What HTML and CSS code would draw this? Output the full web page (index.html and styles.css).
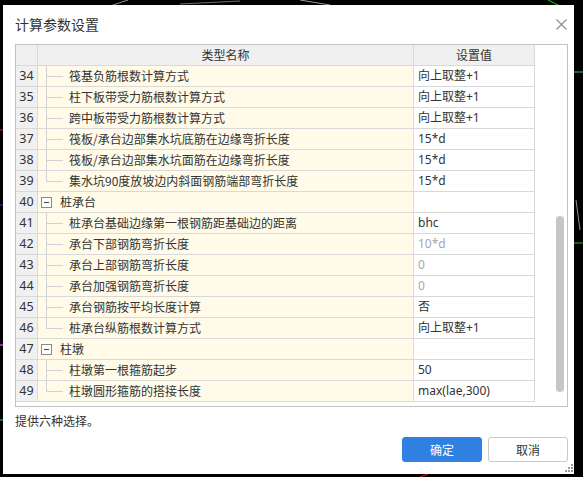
FILE: index.html
```html
<!DOCTYPE html>
<html lang="zh">
<head>
<meta charset="utf-8">
<title>计算参数设置</title>
<link rel="stylesheet" href="styles.css">
</head>
<body>
<svg class="backdrop" width="583" height="477" viewBox="0 0 583 477">
  <line x1="110" y1="6" x2="128" y2="0" stroke="#8a8a8a" stroke-width="1"/>
  <line x1="180" y1="4" x2="240" y2="1" stroke="#707070" stroke-width="1"/>
  <line x1="300" y1="0" x2="330" y2="5" stroke="#9a9a9a" stroke-width="1"/>
  <line x1="548" y1="0" x2="560" y2="6" stroke="#1ec81e" stroke-width="1"/>
  <line x1="0" y1="130" x2="3" y2="130" stroke="#d02020" stroke-width="1"/>
  <line x1="0" y1="205" x2="3" y2="205" stroke="#2040d0" stroke-width="1"/>
  <line x1="0" y1="345" x2="3" y2="345" stroke="#a020d0" stroke-width="2"/>
  <line x1="0" y1="420" x2="3" y2="420" stroke="#20c0c0" stroke-width="1"/>
  <line x1="574" y1="72" x2="583" y2="72" stroke="#20c0c0" stroke-width="1"/>
  <line x1="574" y1="243" x2="583" y2="243" stroke="#20c020" stroke-width="1"/>
  <line x1="576" y1="200" x2="580" y2="230" stroke="#909090" stroke-width="1"/>
  <line x1="420" y1="477" x2="428" y2="474" stroke="#d02020" stroke-width="1"/>
</svg>

<div class="dialog">
  <div class="titlebar">
    <span class="title">计算参数设置</span>
    <svg class="close" width="11" height="11" viewBox="0 0 11 11">
      <line x1="0.5" y1="0.5" x2="10.5" y2="10.5" stroke="#8c8c8c" stroke-width="1.1"/>
      <line x1="10.5" y1="0.5" x2="0.5" y2="10.5" stroke="#8c8c8c" stroke-width="1.1"/>
    </svg>
  </div>

  <div class="grid">
    <div class="cols">
      <div class="row head">
        <div class="num"></div>
        <div class="name hname">类型名称</div>
        <div class="val hval">设置值</div>
      </div>

      <div class="row"><div class="num">34</div><div class="name"><svg class="tree" width="31" height="20"><line x1="8.5" y1="0" x2="8.5" y2="20"/><line x1="8.5" y1="10.5" x2="25" y2="10.5"/></svg>筏基负筋根数计算方式</div><div class="val">向上取整+1</div></div>
      <div class="row"><div class="num">35</div><div class="name"><svg class="tree" width="31" height="20"><line x1="8.5" y1="0" x2="8.5" y2="20"/><line x1="8.5" y1="10.5" x2="25" y2="10.5"/></svg>柱下板带受力筋根数计算方式</div><div class="val">向上取整+1</div></div>
      <div class="row"><div class="num">36</div><div class="name"><svg class="tree" width="31" height="20"><line x1="8.5" y1="0" x2="8.5" y2="20"/><line x1="8.5" y1="10.5" x2="25" y2="10.5"/></svg>跨中板带受力筋根数计算方式</div><div class="val">向上取整+1</div></div>
      <div class="row"><div class="num">37</div><div class="name"><svg class="tree" width="31" height="20"><line x1="8.5" y1="0" x2="8.5" y2="20"/><line x1="8.5" y1="10.5" x2="25" y2="10.5"/></svg>筏板/承台边部集水坑底筋在边缘弯折长度</div><div class="val">15*d</div></div>
      <div class="row"><div class="num">38</div><div class="name"><svg class="tree" width="31" height="20"><line x1="8.5" y1="0" x2="8.5" y2="20"/><line x1="8.5" y1="10.5" x2="25" y2="10.5"/></svg>筏板/承台边部集水坑面筋在边缘弯折长度</div><div class="val">15*d</div></div>
      <div class="row"><div class="num">39</div><div class="name"><svg class="tree" width="31" height="20"><line x1="8.5" y1="0" x2="8.5" y2="10.5"/><line x1="8.5" y1="10.5" x2="25" y2="10.5"/></svg>集水坑90度放坡边内斜面钢筋端部弯折长度</div><div class="val">15*d</div></div>

      <div class="row"><div class="num">40</div><div class="name cat"><svg class="box" width="22" height="20"><rect x="3.5" y="5.5" width="10" height="10" fill="#fff" stroke="#8a8a8a"/><line x1="6" y1="10.5" x2="11" y2="10.5" stroke="#444"/></svg>桩承台</div><div class="val"></div></div>
      <div class="row"><div class="num">41</div><div class="name"><svg class="tree" width="31" height="20"><line x1="8.5" y1="0" x2="8.5" y2="20"/><line x1="8.5" y1="10.5" x2="25" y2="10.5"/></svg>桩承台基础边缘第一根钢筋距基础边的距离</div><div class="val">bhc</div></div>
      <div class="row"><div class="num">42</div><div class="name"><svg class="tree" width="31" height="20"><line x1="8.5" y1="0" x2="8.5" y2="20"/><line x1="8.5" y1="10.5" x2="25" y2="10.5"/></svg>承台下部钢筋弯折长度</div><div class="val dim">10*d</div></div>
      <div class="row"><div class="num">43</div><div class="name"><svg class="tree" width="31" height="20"><line x1="8.5" y1="0" x2="8.5" y2="20"/><line x1="8.5" y1="10.5" x2="25" y2="10.5"/></svg>承台上部钢筋弯折长度</div><div class="val dim">0</div></div>
      <div class="row"><div class="num">44</div><div class="name"><svg class="tree" width="31" height="20"><line x1="8.5" y1="0" x2="8.5" y2="20"/><line x1="8.5" y1="10.5" x2="25" y2="10.5"/></svg>承台加强钢筋弯折长度</div><div class="val dim">0</div></div>
      <div class="row"><div class="num">45</div><div class="name"><svg class="tree" width="31" height="20"><line x1="8.5" y1="0" x2="8.5" y2="20"/><line x1="8.5" y1="10.5" x2="25" y2="10.5"/></svg>承台钢筋按平均长度计算</div><div class="val">否</div></div>
      <div class="row"><div class="num">46</div><div class="name"><svg class="tree" width="31" height="20"><line x1="8.5" y1="0" x2="8.5" y2="10.5"/><line x1="8.5" y1="10.5" x2="25" y2="10.5"/></svg>桩承台纵筋根数计算方式</div><div class="val">向上取整+1</div></div>

      <div class="row"><div class="num">47</div><div class="name cat"><svg class="box" width="22" height="20"><rect x="3.5" y="5.5" width="10" height="10" fill="#fff" stroke="#8a8a8a"/><line x1="6" y1="10.5" x2="11" y2="10.5" stroke="#444"/></svg>柱墩</div><div class="val"></div></div>
      <div class="row"><div class="num">48</div><div class="name"><svg class="tree" width="31" height="20"><line x1="8.5" y1="0" x2="8.5" y2="20"/><line x1="8.5" y1="10.5" x2="25" y2="10.5"/></svg>柱墩第一根箍筋起步</div><div class="val">50</div></div>
      <div class="row"><div class="num">49</div><div class="name"><svg class="tree" width="31" height="20"><line x1="8.5" y1="0" x2="8.5" y2="10.5"/><line x1="8.5" y1="10.5" x2="25" y2="10.5"/></svg>柱墩圆形箍筋的搭接长度</div><div class="val">max(lae,300)</div></div>
    </div>
    <div class="vscroll"><div class="thumb"></div></div>
  </div>

  <div class="hint">提供六种选择。</div>

  <div class="buttons">
    <button class="btn primary">确定</button>
    <button class="btn">取消</button>
  </div>
  <svg class="grip" width="10" height="8" viewBox="0 0 10 8">
    <rect x="7" y="0" width="2" height="2" fill="#9a9a9a"/>
    <rect x="4" y="3" width="2" height="2" fill="#9a9a9a"/>
    <rect x="7" y="3" width="2" height="2" fill="#9a9a9a"/>
    <rect x="1" y="6" width="2" height="2" fill="#9a9a9a"/>
    <rect x="4" y="6" width="2" height="2" fill="#9a9a9a"/>
    <rect x="7" y="6" width="2" height="2" fill="#9a9a9a"/>
  </svg>
</div>
</body>
</html>
```

FILE: styles.css
```css
html, body {
  margin: 0;
  padding: 0;
}
body {
  background: #000;
  width: 583px;
  height: 477px;
  overflow: hidden;
  position: relative;
  font-family: "Noto Sans", "Noto Sans CJK SC", sans-serif;
  font-size: 12px;
  color: #222;
}
.backdrop {
  position: absolute;
  left: 0;
  top: 0;
}
.dialog {
  position: relative;
  margin: 5px 0 0 3px;
  width: 571px;
  height: 469px;
  background: #fff;
  display: flex;
  flex-direction: column;
  padding-left: 12px;
  box-sizing: border-box;
}
.titlebar {
  height: 39px;
  display: flex;
  align-items: center;
  justify-content: space-between;
  padding-right: 7px;
}
.title {
  font-family: "Noto Sans CJK SC", sans-serif;
  font-size: 14px;
  color: #333;
  line-height: 20px;
  margin-top: -1px;
}
.close {
  display: block;
  margin-top: -1px;
}
.grid {
  width: 553px;
  height: 363px;
  box-sizing: border-box;
  border: 1px solid #c2c2c2;
  display: flex;
}
.cols {
  width: 519px;
  display: flex;
  flex-direction: column;
}
.row {
  display: grid;
  grid-template-columns: 22px 376px 121px;
  height: 21px;
}
.row > div {
  box-sizing: border-box;
  border-right: 1px solid #d9d9d9;
  border-bottom: 1px solid #d9d9d9;
  height: 21px;
  line-height: 20px;
  white-space: nowrap;
  overflow: hidden;
}
.num {
  background: #f0f0f0;
  text-align: center;
  color: #333;
  font-size: 12.5px;
}
.name {
  background: #fffbe8;
  display: flex;
  align-items: center;
  font-family: "Noto Sans CJK SC", sans-serif;
  color: #333;
}
.val {
  background: #fff;
  padding-left: 4px;
  color: #333;
}
.val.dim {
  color: #a6a6a6;
}
.head > div {
  background: #f0f0f0;
}
.hname, .hval {
  justify-content: center;
  text-align: center;
  padding-left: 0;
  font-family: "Noto Sans CJK SC", sans-serif;
  color: #333;
}
.tree {
  display: block;
  flex: none;
  stroke: #d2d2d2;
  stroke-width: 1;
}
.box {
  display: block;
  flex: none;
}
.vscroll {
  width: 32px;
  padding-top: 171px;
  padding-left: 21px;
  box-sizing: border-box;
  background: #fff;
}
.thumb {
  width: 8px;
  height: 176px;
  border-radius: 4px;
  background: #c6c6c6;
}
.hint {
  margin-top: 6px;
  line-height: 16px;
  font-family: "Noto Sans CJK SC", sans-serif;
  color: #333;
}
.buttons {
  margin-top: 8px;
  display: flex;
  justify-content: flex-end;
  gap: 6px;
  padding-right: 6px;
}
.btn {
  width: 80px;
  height: 25px;
  box-sizing: border-box;
  border: 1px solid #c8c8c8;
  border-radius: 3px;
  background: #fff;
  color: #333;
  font-family: "Noto Sans CJK SC", sans-serif;
  font-size: 12px;
  padding: 0;
  margin: 0;
}
.btn.primary {
  background: #2f80e0;
  border-color: #2f80e0;
  color: #fff;
}
.grip {
  position: absolute;
  right: 0;
  bottom: 2px;
}
```
